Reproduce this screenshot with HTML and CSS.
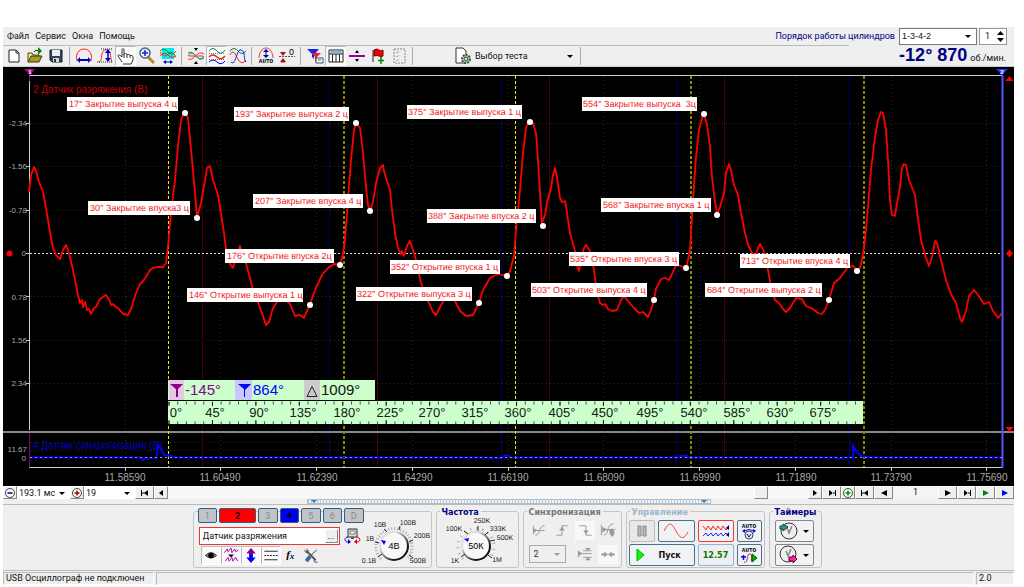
FILE: index.html
```html
<!DOCTYPE html>
<html lang="ru">
<head>
<meta charset="utf-8">
<title>USB Осциллограф</title>
<link rel="stylesheet" href="styles.css">
</head>
<body>
<div class="app">
<header class="head">
  <div class="menu-row">
    <nav class="menu">
      <button class="menu-item">Файл</button><button class="menu-item">Сервис</button><button class="menu-item">Окна</button><button class="menu-item">Помощь</button>
    </nav>
    <label class="order-label" for="order">Порядок работы цилиндров</label>
    <span class="pick order"><select id="order"><option>1-3-4-2</option></select></span>
    <span class="spin"><input id="cyl" aria-label="Номер цилиндра" value="1"><svg class="spin-arrows" viewBox="0 0 7 12" aria-hidden="true"><path d="M0 5 3.500 1 7 5zM0 8h7L3.500 12z"/></svg></span>
  </div>
  <div class="tool-row">
    <div class="tools">
      <button class="tool" aria-label="Новый"><svg viewBox="0 0 18 18"><path d="M4 3h7l3 3v9H4z" fill="#fff" stroke="#222"/><path d="M11 3v3h3" fill="none" stroke="#222"/></svg></button>
      <button class="tool" aria-label="Открыть"><svg viewBox="0 0 18 18"><path d="M2 15V6h4l1 2h6v2" fill="#f0e8a0" stroke="#554a00"/><path d="M2 15 5 9h11l-3 6z" fill="#a89830" stroke="#403800"/><path d="M8 5c1-2 3-2 4-1" fill="none" stroke="#222"/><path d="M12 0v8l4-4z" fill="#080"/></svg></button>
      <button class="tool" aria-label="Сохранить"><svg viewBox="0 0 18 18"><path d="M3 3h12v12H5l-2-2z" fill="#345" stroke="#123"/><path d="M5 3h8v6H5z" fill="#e8eef4"/><path d="M6 11h6v4H6z" fill="#cdd"/><path d="M7 12h2v3H7z" fill="#234"/></svg></button>
      <i class="sep"></i>
      <button class="tool" aria-label="Период"><svg viewBox="0 0 18 18"><path d="M2 14C0 7 4 2 9 2s9 5 7 12" fill="none" stroke="#f22"/><path d="M4 13h10" stroke="#00c" stroke-width="2"/><path d="M2 13l3-3v6zM16 13l-3-3v6z" fill="#00c"/></svg></button>
      <button class="tool" aria-label="Амплитуда"><svg viewBox="0 0 18 18"><path d="M1 15c5 0 4-3 5-8S11 2 13 4s1 7 3 11" fill="none" stroke="#f22"/><path d="M5 2h12M3 15h14" stroke="#222" stroke-dasharray="1 1"/><path d="M12 5v8" stroke="#00c" stroke-width="1.500"/><path d="M12 2l-3 4h6zM12 15l-3-4h6z" fill="#00c"/></svg></button>
      <button class="tool on" aria-label="Рука"><svg viewBox="0 0 18 18"><path d="M5 15 1 9c0-2 2-1 4 1V3c0-2 2-2 2 0v5c0-2 3-2 3 0 0-1 3-1 3 1 0-1 3-1 3 1v3l-2 4H6" fill="#fff" stroke="#333"/><path d="M7 8v3M10 8v3M13 9v2" stroke="#333"/></svg></button>
      <button class="tool" aria-label="Лупа"><svg viewBox="0 0 18 18"><path d="m10 10 6 6" stroke="#b98a30" stroke-width="3"/><circle cx="7" cy="6" r="5" fill="#e8f4ff" stroke="#468" stroke-width="1.500"/><path d="M4 6h6M7 3v6" stroke="#22b" stroke-width="1.500"/></svg></button>
      <button class="tool" aria-label="Область"><svg viewBox="0 0 18 18"><path d="M3 1h12v11H3z" fill="#0ee"/><path d="M1 4q4-4 8 1t8-1" fill="none" stroke="#084"/><path d="M1 9q4-5 8-1t8 1" fill="none" stroke="#e22"/><path d="M1 5q4 7 8 2t8 3" fill="none" stroke="#a52"/><path d="M5 15h8" stroke="#00c"/><path d="M4 15l3-2v4zM14 15l-3-2v4z" fill="#00c"/></svg></button>
      <i class="sep"></i>
      <button class="tool" aria-label="Совместить"><svg viewBox="0 0 18 18"><path d="M1 6c6-4 9 10 16 5" fill="none" stroke="#385"/><path d="M1 12c6 3 9-10 16-5M2 9h14" fill="none" stroke="#e33"/><path d="M1 9q4-6 8 0t8 0" fill="none" stroke="#385"/><path d="M9 4 7 1h4zM9 14l-2 3h4z"/></svg></button>
      <button class="tool on" aria-label="Разделить"><svg viewBox="0 0 18 18"><path d="M1 4q4-5 8 0t8-1" fill="none" stroke="#085"/><path d="M1 10q4-4 8 0t8-1" fill="none" stroke="#e22" stroke-width="1.500"/><path d="M1 15q4-4 8 0t8-1" fill="none" stroke="#00d"/><path d="M1 6.500h16M1 12.500h16" stroke="#777" stroke-dasharray="1 1"/></svg></button>
      <button class="tool" aria-label="Наложить"><svg viewBox="0 0 18 18"><path d="M1 4q4-5 8 0t8 0" fill="none" stroke="#084"/><path d="M1 8C7-4 8 24 17 13" fill="none" stroke="#e22"/><path d="M2 15C7 20 7 2 12 3s2 10 5 12" fill="none" stroke="#22d"/></svg></button>
      <i class="sep"></i>
      <button class="tool" aria-label="Авто"><svg viewBox="0 0 18 18"><path d="M2 11c0-5 3-10 7-10s7 5 7 10" fill="none" stroke="#e33"/><path d="M9 4v6" stroke="#00b"/><path d="M9 2 6 5h6zM9 11 6 8h6z" fill="#00b"/><text x="9" y="16" class="auto">AUTO</text></svg></button>
      <button class="tool" aria-label="Ноль"><svg viewBox="0 0 18 18"><path d="M1 9.500h16" stroke="#555" stroke-dasharray="2 1"/><path d="M5 9 2 5h6zM5 11l-3 4h6z" fill="#a11"/><path d="M3 15h4" stroke="#a11"/><text x="11" y="8" class="zero">0</text></svg></button>
      <i class="sep"></i>
      <button class="tool" aria-label="Фильтр"><svg viewBox="0 0 18 18"><path d="M1 2h12L8 8v4L6 10V7z" fill="#22e"/><path d="M6 6h9l-4 4v6l-2-2v-4z" fill="#e22"/><path d="M10 11h7v5h-7z" fill="#fff" stroke="#357"/><path d="M12 13h3" stroke="#357"/></svg></button>
      <button class="tool on" aria-label="Таблица"><svg viewBox="0 0 18 18"><path d="M2 3h14v12H2z" fill="#fff" stroke="#222"/><path d="M2 4h14v2H2z" fill="#7bd"/><path d="M2 7h14M5.500 7v8M9 7v8M12.500 7v8" stroke="#222"/></svg></button>
      <button class="tool" aria-label="Линия"><svg viewBox="0 0 18 18"><path d="M1 9h16" stroke="#90a" stroke-width="2"/><path d="M9 3 7 6h4zM9 15l-2-3h4z"/></svg></button>
      <button class="tool" aria-label="Метка"><svg viewBox="0 0 18 18"><path d="M4 3v12" stroke="#222"/><path d="M5 3q3-2 5 0t4 0v6q-2 1-4 0t-5 0z" fill="#e00" stroke="#700"/><path d="M12 10v7M9 13.500h6" stroke="#080" stroke-width="1.500"/></svg></button>
      <button class="tool" aria-label="Отчёт"><svg viewBox="0 0 18 18"><path d="M4 2h11v14H4z" fill="#eee" stroke="#888" stroke-dasharray="2 1"/><path d="m6 5 1 1 2-2M6 9l1 1 2-2M6 13l1 1 2-2" fill="none" stroke="#aaa"/></svg></button>
      <i class="sep"></i>
      <button class="test"><svg class="test-icon" viewBox="0 0 18 18"><path d="M2 1h7l3 3v12H2z" fill="#fff" stroke="#333"/><circle cx="12" cy="12" r="4" fill="#ccd8c4" stroke="#354" stroke-width="2" stroke-dasharray="2 1"/><circle cx="12" cy="12" r="2" fill="none" stroke="#354"/></svg><span>Выбор теста</span><i class="caret"></i></button>
      <i class="sep"></i>
    </div>
    <div class="readout"><b>-12° 870</b><span>об./мин.</span></div>
  </div>
</header>

<main>
<svg class="scope" viewBox="3 67 1011 419" role="img" aria-label="Осциллограмма">
  <rect x="3" y="67" width="1011" height="419"/>
  <g class="grid">
    <path d="M125.500 76v392M220.500 76v392M316.500 76v392M412.500 76v392M508.500 76v392M603.500 76v392M699.500 76v392M795.500 76v392M891.500 76v392M986.500 76v392"/>
    <path d="M30 123.500h972M30 166.500h972M30 210.500h972M30 296.500h972M30 340.500h972M30 383.500h972M30 442.500h972M30 450.500h972"/>
  </g>
  <path class="mark-red" d="M202.500 76v391M377.500 76v391M549.500 76v391M724.500 76v391"/>
  <path class="mark-blue" d="M329.500 76v391M501.500 76v391M676.500 76v391M849.500 76v391"/>
  <path class="frame" d="M29.500 430V75.500H1002M26 123.500h4M26 166.500h4M26 210.500h4M26 253.500h4M26 296.500h4M26 340.500h4M26 383.500h4M29.500 442v25.500H1002M125.500 467v4M220.500 467v4M316.500 467v4M412.500 467v4M508.500 467v4M603.500 467v4M699.500 467v4M795.500 467v4M891.500 467v4M986.500 467v4"/>
  <path d="M3 432h1011" stroke="#888" stroke-width="2"/>
  <path d="M30 253.500h972" stroke="#ddd" stroke-dasharray="2 2"/>
  <path d="M168.500 76v391M515.500 76v391" stroke="#ee0" stroke-dasharray="3 2"/>
  <path d="M344 76v391M691 76v391M864 76v391" stroke="#880" stroke-width="2" stroke-dasharray="3 2"/>
  <g class="channel-names"><text x="33" y="93" fill="#c00000">2 Датчик разряжения (В)</text><text x="33" y="449" fill="#0000c8">4 Датчик синхронизации (В)</text></g>
  <path class="wave" d="M29 192 31 175 34 167 36 171 39 182 43 192 46 208 50 232 53 248 56 255 60 259 63 250 66 245 69 253 73 270 78 295 80 303 82 300 83 307 85 302 87 310 89 309 91 314 94 308 96 307 100 299 103 297 106 295 109 299 111 305 113 304 116 307 118 308 123 314 128 315 131 309 136 293 140 284 144 280 150 270 153 268 157 267 163 267 166 263 168 246 171 213 175 180 178 146 181 120 184 112 188 118 192 160 195 193 197 217 201 203 205 180 207 168 210 166 213 180 218 195 220 207 224 233 227 257 230 264 233 268 236 256 240 246 246 263 253 290 259 305 263 316 266 325 269 322 273 308 279 299 285 299 290 304 295 316 300 315 304 318 307 311 310 304 315 290 322 275 328 268 334 264 339 265 342 259 345 240 348 200 351 160 354 130 356 123 360 128 363 153 366 187 368 205 370 211 373 202 376 183 380 168 381 167 383 165 384 171 386 178 388 184 390 190 392 210 395 233 398 248 401 254 402 251 404 256 407 246 410 241 413 250 416 260 421 283 428 301 433 312 436 315 441 305 446 297 451 296 455 301 460 311 466 316 473 315 476 309 479 302 483 290 490 278 498 274 502 275 507 276 510 271 514 256 516 230 520 190 523 153 526 128 529 121 533 123 536 133 538 160 540 193 542 223 545 215 547 203 551 188 553 175 555 168 557 177 560 198 562 202 565 201 567 213 570 233 575 251 577 266 579 271 581 260 584 248 586 245 590 251 594 270 597 293 600 303 603 305 605 304 608 309 612 311 617 310 621 300 624 296 628 301 634 308 639 313 643 312 648 317 651 310 654 300 656 289 661 279 665 278 669 280 672 274 676 265 681 266 686 268 688 260 690 250 693 200 696 157 699 130 702 118 704 114 707 125 710 147 712 177 715 202 717 214 720 207 724 193 726 173 729 164 731 170 734 185 738 195 741 213 745 233 748 245 752 253 756 255 758 248 760 244 764 251 768 270 771 287 775 300 779 303 783 309 786 312 790 308 796 298 802 299 806 306 813 309 818 313 822 314 825 310 829 300 834 283 840 278 848 267 853 266 857 270 860 268 862 260 865 240 868 207 871 170 875 137 878 120 881 112 883 113 886 130 888 160 890 200 892 215 895 216 897 203 900 187 902 168 904 164 906 165 909 180 915 195 917 212 921 240 926 258 929 266 932 257 935 241 937 243 941 260 946 280 951 294 956 303 960 318 962 322 966 311 969 296 974 290 978 295 984 304 989 302 993 311 998 318 1002 313"/>
  <path class="sync" d="M30 457.500H141L143 460 145 458H156.500L158 445 161 449 164 455 170 456 176 457.500H488L490 459 494 458 502 458 506 455 511 457.500H680V456H687V457.500H836L839 459 843 457.500H853V446L857 452 861 456 870 457.500H1002"/>
  <path d="M30 457.500h972" stroke="#99b" stroke-dasharray="2 3"/>
  <g class="callouts">
    <rect x="67" y="97" width="111" height="14"/><rect x="234" y="107" width="115" height="14"/><rect x="407" y="105" width="115" height="14"/><rect x="582" y="97" width="115" height="14"/>
    <rect x="88" y="201" width="102" height="14"/><rect x="253" y="194" width="110" height="14"/><rect x="427" y="209" width="109" height="14"/><rect x="601" y="198" width="110" height="14"/>
    <rect x="225" y="249" width="109" height="14"/><rect x="390" y="260" width="110" height="14"/><rect x="569" y="252" width="110" height="14"/><rect x="740" y="254" width="110" height="14"/>
    <rect x="187" y="288" width="116" height="14"/><rect x="356" y="287" width="116" height="14"/><rect x="531" y="283" width="116" height="14"/><rect x="705" y="283" width="117" height="14"/>
    <text x="69" y="107">17° Закрытие выпуска 4 ц</text><text x="235" y="117">193° Закрытие выпуска 2 ц</text><text x="408" y="115">375° Закрытие выпуска 1 ц</text><text x="583" y="107" xml:space="preserve">554° Закрытие выпуска  3ц</text>
    <text x="90" y="211">30° Закрытие впуска3 ц</text><text x="255" y="204">207° Закрытие впуска 4 ц</text><text x="428" y="219">388° Закрытие впуска 2 ц</text><text x="603" y="208">568° Закрытие впуска 1 ц</text>
    <text x="227" y="259">176° Открытие впуска 2ц</text><text x="391" y="270">352° Открытие впуска 1 ц</text><text x="570" y="262">535° Открытие впуска 3 ц</text><text x="741" y="264">713° Открытие впуска 4 ц</text>
    <text x="189" y="298">146° Открытие выпуска 1 ц</text><text x="357" y="297">322° Открытие выпуска 3 ц</text><text x="532" y="293">503° Открытие выпуска 4 ц</text><text x="707" y="293">684° Открытие выпуска 2 ц</text>
  </g>
  <g fill="#fff"><circle cx="185" cy="113" r="3"/><circle cx="356" cy="123" r="3"/><circle cx="530" cy="122" r="3"/><circle cx="704" cy="114" r="3"/><circle cx="197" cy="218" r="3"/><circle cx="370" cy="211" r="3"/><circle cx="543" cy="226" r="3"/><circle cx="717" cy="215" r="3"/><circle cx="340" cy="265" r="3"/><circle cx="507" cy="276" r="3"/><circle cx="686" cy="268" r="3"/><circle cx="857" cy="271" r="3"/><circle cx="310" cy="305" r="3"/><circle cx="479" cy="303" r="3"/><circle cx="654" cy="300" r="3"/><circle cx="829" cy="300" r="3"/></g>
  <g class="y-axis"><text x="27" y="126">-2.34</text><text x="27" y="169">-1.56</text><text x="27" y="213">-0.78</text><text x="26" y="256">0</text><text x="27" y="300">0.78</text><text x="27" y="343">1.56</text><text x="27" y="386">2.34</text><text x="27" y="452">11.67</text><text x="26" y="461">0</text></g>
  <g class="x-axis"><text x="125" y="481">11.58590</text><text x="220" y="481">11.60490</text><text x="317" y="481">11.62390</text><text x="412" y="481">11.64290</text><text x="508" y="481">11.66190</text><text x="604" y="481">11.68090</text><text x="700" y="481">11.69990</text><text x="796" y="481">11.71890</text><text x="891" y="481">11.73790</text><text x="987" y="481">11.75690</text></g>
  <g class="ruler">
    <rect x="168" y="380" width="207" height="20" fill="#cfc"/><rect x="169" y="380" width="15" height="20" fill="#e6c8e6"/><rect x="235" y="380" width="17" height="20" fill="#c8c8ff"/><rect x="304" y="380" width="16" height="20" fill="#ccc"/>
    <path d="M170 384h13l-6 6zM176 386h2v11h-2z" fill="#808"/><path d="M238 384h13l-6 6zM244 386h1v11h-1z" fill="#00f"/><path d="M307 396.500h10l-5-10z" fill="none" stroke="#222"/>
    <g class="deltas"><text x="185" y="395" fill="#808">-145°</text><text x="253" y="395" fill="#00f">864°</text><text x="321" y="395" fill="#111">1009°</text></g>
    <rect x="168" y="401" width="695" height="23" fill="#cfc"/>
    <path d="M168.500 403h695M168.500 423h695" stroke="#354" stroke-width="3" stroke-dasharray="1 7.690"/><path d="M168.500 404h695M168.500 422h695" stroke="#121" stroke-width="4" stroke-dasharray="1 42.440"/>
    <g class="degrees"><text x="176" y="417">0°</text><text x="215" y="417">45°</text><text x="259" y="417">90°</text><text x="303" y="417">135°</text><text x="347" y="417">180°</text><text x="390" y="417">225°</text><text x="432" y="417">270°</text><text x="475" y="417">315°</text><text x="518" y="417">360°</text><text x="562" y="417">405°</text><text x="605" y="417">450°</text><text x="650" y="417">495°</text><text x="694" y="417">540°</text><text x="737" y="417">585°</text><text x="780" y="417">630°</text><text x="823" y="417">675°</text></g>
  </g>
  <path d="M29.500 76v5M29.500 433v34" stroke="#808"/><path d="M24 69h11l-5 6z" fill="#a0a"/><text x="30" y="74" class="flag">1</text>
  <path d="M1002.500 75v393" stroke="#55f" stroke-width="2"/><path d="M996 69h12l-6 6z" fill="#33f"/><text x="1002" y="74" class="flag">2</text>
  <path d="M1009.500 76l4 5h-8zM1009.500 432l4-5h-8zM1009.500 249.500l3.500 4-3.500 4-3.500-4z" fill="#f00"/><circle cx="9.500" cy="253.500" r="3" fill="#f00"/>
</svg>
</main>

<div class="nav-row">
  <button class="nav round" aria-label="Сжать"><svg viewBox="0 0 12 12"><circle cx="6" cy="6" r="4.500" fill="#fff" stroke="#444"/><path d="M3.500 6h5" stroke="#008" stroke-width="1.500"/></svg></button>
  <span class="pick time"><select aria-label="Развёртка"><option>193.1 мс</option></select></span>
  <button class="nav round" aria-label="Растянуть"><svg viewBox="0 0 12 12"><circle cx="6" cy="6" r="4.500" fill="#fff" stroke="#444"/><path d="M3.500 6h5M6 3.500v5" stroke="#a00" stroke-width="1.500"/></svg></button>
  <span class="pick count"><select aria-label="Кадр"><option>19</option></select></span>
  <button class="nav" aria-label="В начало"><svg viewBox="0 0 12 12"><path d="M2 3h1v6H2zM9 3v6L5 6zM3 5.500h3v1H3z"/></svg></button>
  <button class="nav small" aria-label="Назад"><svg viewBox="0 0 12 12"><path d="M8 3v6L4 6z"/></svg></button>
  <div class="track"><span class="thumb"></span></div>
  <button class="nav small" aria-label="Вперёд"><svg viewBox="0 0 12 12"><path d="M4 3v6l4-3z"/></svg></button>
  <button class="nav" aria-label="В конец"><svg viewBox="0 0 12 12"><path d="M9 3h1v6H9zM3 3v6l4-3zM6 5.500h3v1H6z"/></svg></button>
  <button class="nav round" aria-label="Добавить"><svg viewBox="0 0 12 12"><circle cx="6" cy="6" r="4.500" fill="#fff" stroke="#444"/><path d="M3.500 6h5M6 3.500v5" stroke="#080" stroke-width="1.500"/></svg></button>
  <button class="nav" aria-label="Первый"><svg viewBox="0 0 12 12"><path d="M2 3h1v6H2zM9 3v6L5 6zM3 5.500h3v1H3z"/></svg></button>
  <button class="nav" aria-label="Предыдущий"><svg viewBox="0 0 12 12"><path d="M9 3v6L3 6z"/></svg></button>
  <span class="page">1</span>
  <button class="nav" aria-label="Следующий"><svg viewBox="0 0 12 12"><path d="M3 3v6l6-3z"/></svg></button>
  <button class="nav" aria-label="Последний"><svg viewBox="0 0 12 12"><path d="M9 3h1v6H9zM3 3v6l4-3zM6 5.500h3v1H6z"/></svg></button>
  <button class="nav" aria-label="Воспроизвести"><svg viewBox="0 0 12 12"><path d="M3 3v6l6-3z" fill="#080"/></svg></button>
  <button class="nav" aria-label="Далее"><svg viewBox="0 0 12 12"><path d="M3 3v6l6-3z" fill="#00f"/></svg></button>
</div>
<div class="splitter"><span class="grip"></span></div>

<section class="panel">
  <div class="group channels">
    <div class="channel-left">
      <div class="tabs"><button class="tab">1</button><button class="tab red">2</button><button class="tab">3</button><button class="tab blue">4</button><button class="tab">5</button><button class="tab">6</button><button class="tab">D</button></div>
      <div class="sensor-row"><span class="sensor"><input aria-label="Датчик" value="Датчик разряжения"><button class="more" aria-label="Выбрать датчик">...</button></span>
        <button class="tool" aria-label="Подключение"><svg viewBox="0 0 18 18"><path d="M5 2h9v8H5z" fill="#ddd" stroke="#333"/><path d="M7 4h5v3H7z" fill="#fff" stroke="#777"/><path d="M8 10h3v2H8z" fill="#555"/><path d="M5 10c-4 0-4 5 0 5" fill="none" stroke="#00c"/><path d="m5 12 3 3-3 2z" fill="#00c"/><path d="M13 10c5 0 5 5 1 5" fill="none" stroke="#e00"/><path d="m14 12-3 3 3 2z" fill="#e00"/></svg></button></div>
      <div class="view-row">
        <button class="view on" aria-label="Показать"><svg viewBox="0 0 18 18"><path d="M3 9q6-6 12 0-6 5-12 0" fill="#999" stroke="#222"/><circle cx="9" cy="9" r="3"/></svg></button>
        <button class="view on" aria-label="Форма"><svg viewBox="0 0 18 18"><path d="m2 6 3-4 1 3 3-4 1 5 3-4 1 3 3-2" fill="none" stroke="#a0a"/><path d="m3 15 3-4 1 4 3-4 1 4 3-4 2 4" fill="none" stroke="#a0a"/><path d="M6 8h6l-3 3z"/></svg></button>
        <button class="view on" aria-label="Инверсия"><svg viewBox="0 0 18 18"><path d="m9 1 5 6h-3v2H7V7H4z" fill="#808"/><path d="m9 17 5-6h-3V8H7v3H4z" fill="#00f"/></svg></button>
        <button class="view on" aria-label="Уровни"><svg viewBox="0 0 18 18"><path d="M2 4.500h14M2 13.500h14" stroke="#222"/><path d="M2 9h14" stroke="#222" stroke-dasharray="2 1"/></svg></button>
        <button class="view" aria-label="Функция"><svg viewBox="0 0 18 18"><text x="4" y="12" class="fx">f</text><text x="8" y="13" class="fx-sub">x</text></svg></button>
        <button class="view" aria-label="Настройка"><svg viewBox="0 0 18 18"><path d="m4 4 10 10" stroke="#555" stroke-width="2"/><path d="M15 3 8 10" stroke="#333"/><path d="m8 10-4 5" stroke="#36a" stroke-width="4"/><path d="M2 3q1 4 4 3 1-3-2-4M12 14q0 3 4 2" fill="none" stroke="#555"/></svg></button>
      </div>
    </div>
    <svg class="knob volts" viewBox="360 516 72 51" role="img" aria-label="Чувствительность 4В">
      <defs><linearGradient id="rim" x1="0" y1="0" x2="1" y2="1"><stop offset=".3" stop-color="#ddd"/><stop offset=".75" stop-color="#111"/></linearGradient></defs>
      <path class="knob-ticks" d="M381 560A18 18 0 1 1 407 560"/><circle cx="394" cy="547" r="14" fill="#f8f8f8" stroke="url(#rim)" stroke-width="2"/>
      <path d="m381 541 5 1-2 4z" fill="#00f"/><path class="marks" d="m378 558 4-3M375 543l4 1M384 530l3 3M400 527l-1 4M413 541l-4 2M409 556l4 3"/>
      <text x="394" y="550" class="knob-value">4В</text>
      <g class="knob-labels"><text x="369" y="564">0.1В</text><text x="370" y="542">1В</text><text x="380" y="528">10В</text><text x="408" y="526">100В</text><text x="422" y="539">200В</text><text x="418" y="564">500В</text></g>
    </svg>
  </div>
  <fieldset class="group freq"><legend>Частота</legend>
    <svg class="knob hertz" viewBox="440 516 76 51" role="img" aria-label="Частота 50K">
      <path class="knob-ticks wide-ticks" d="M463 560A18 18 0 1 1 489 560"/><circle cx="476" cy="547" r="14" fill="#f8f8f8" stroke="url(#rim)" stroke-width="2"/>
      <path d="m464 540 5-1-1 4z" fill="#00f"/><path class="marks" d="m461 558 4-3M464 532l4 3M478 527v5M488 533l-3 3M495 541l-5 1M488 556l4 3"/>
      <text x="476" y="550" class="knob-value">50К</text>
      <g class="knob-labels"><text x="455" y="564">1K</text><text x="454" y="532">100K</text><text x="482" y="524">250K</text><text x="498" y="532">333K</text><text x="505" y="541">500K</text><text x="497" y="563">1M</text></g>
    </svg>
  </fieldset>
  <fieldset class="group sync-group"><legend>Синхронизация</legend>
    <div class="sync-grid">
      <button class="view" aria-label="По спаду"><svg viewBox="0 0 18 18"><path class="dim" d="M3 4v9M3 9h12M5 14c6 0 3-10 10-10"/><path d="m3 6 4 3-4 3z" fill="#999"/></svg></button>
      <button class="view" aria-label="Фронт"><svg viewBox="0 0 18 18"><path class="dim" d="M3 14h6V4h6"/><path d="M9 5 6 9h6z" fill="#999"/></svg></button>
      <button class="view lit" aria-label="Спад"><svg viewBox="0 0 18 18"><path class="dim" d="M3 4h7v10h6"/><path d="m10 13-3-4h6z" fill="#999"/></svg></button>
      <button class="view" aria-label="Ручная"><svg viewBox="0 0 18 18"><path class="dim" d="M2 3v11M2 8h15M5 14C11 12 6 3 15 2"/><path d="m3 5 5 3-5 3zM10 8l4-1 2 4-2 5-3-3z" fill="#999"/></svg></button>
      <span class="pick source"><select aria-label="Источник" disabled><option>2</option></select></span>
      <button class="view" aria-label="Уровень"><svg viewBox="0 0 18 18"><path class="dim" d="M2 5v7M7 5h9M7 12h9M2 8h14"/><path d="m2 5 4 3-4 3zM12 5l3-3H9zM12 12l3 3H9z" fill="#999"/></svg></button>
      <button class="view lit" aria-label="Свести"><svg viewBox="0 0 18 18"><path d="M2 8h3V6l4 3-4 3v-2H2zM16 8h-3V6L9 9l4 3v-2h3z" fill="#999"/></svg></button>
    </div>
  </fieldset>
  <fieldset class="group control"><legend>Управление</legend>
    <div class="control-grid">
      <button class="push flat" aria-label="Пауза"><svg viewBox="0 0 18 18"><path d="M5 4h3v10H5zM10 4h3v10h-3z" fill="#bbb" stroke="#888"/></svg></button>
      <button class="push" aria-label="Синус"><svg class="wide" viewBox="0 0 30 18"><path d="M3 9C8-1 11 1 15 9s8 9 12 1" fill="none" stroke="#f33"/></svg></button>
      <button class="push red-edge" aria-label="Запись"><svg class="wide" viewBox="0 0 30 18"><path d="m2 4 3 4 2-4 3 4 2-4 3 4 2-4 3 4 2-4 3 4 2-3" fill="none" stroke="#f22"/><path d="m2 14 3-3 2 3 3-3 2 3 3-3 2 3 3-3 2 3 3-3 2 2" fill="none" stroke="#22f"/><path d="M25 6l3 2V3zM25 13l3 2v-5z" fill="#008"/></svg></button>
      <button class="push" aria-label="Авто ручки"><svg viewBox="0 0 18 18"><text x="9" y="6" class="auto">AUTO</text><path d="M4 9q5-3 10 0" fill="none" stroke="#00f"/><path d="m2 9 3-2v4zM16 9l-3-2v4z" fill="#00f"/><circle cx="9" cy="13" r="4" fill="#eee" stroke="#444"/><path d="m7 12 2 3 2-3" fill="none" stroke="#00a"/></svg></button>
      <button class="push start"><svg viewBox="0 0 12 18"><path d="M2 3v12l7-6z" fill="#0f0" stroke="#0a0"/></svg><b>Пуск</b></button>
      <output class="timer">12.57</output>
      <button class="push" aria-label="Автозапуск"><svg viewBox="0 0 18 18"><text x="9" y="6" class="auto">AUTO</text><path d="M1 11h5M3.500 9v5" stroke="#00f" stroke-width="1.500"/><path d="M4 16c5 2 2-9 6-8s-1 9 3 7" fill="none" stroke="#b33"/><path d="m12 8 5 4-5 4z" fill="#0a0" stroke="#050"/></svg></button>
    </div>
  </fieldset>
  <fieldset class="group timers"><legend>Таймеры</legend>
    <div class="timer-list">
      <button class="push clock" aria-label="Таймер запуска"><svg viewBox="0 0 22 20"><circle cx="13" cy="10" r="8" fill="#eee" stroke="#333"/><path d="m11 7 2 5 3-7" fill="none" stroke="#888" stroke-width="1.500"/><path d="M4 5h3V3l5 3-5 4V8H4z" fill="#3a9a90" stroke="#044"/></svg><i class="caret"></i></button>
      <button class="push clock" aria-label="Таймер остановки"><svg viewBox="0 0 22 20"><circle cx="12" cy="9" r="8" fill="#eee" stroke="#333"/><path d="m10 6 2 5 3-7" fill="none" stroke="#888" stroke-width="1.500"/><path d="M13 12h4v-2l4 4-4 4v-2h-4z" fill="#f2a" stroke="#603"/></svg><i class="caret"></i></button>
    </div>
  </fieldset>
</section>
<footer class="status"><span class="state">USB Осциллограф не подключен</span><span class="blank"></span><span class="ver">2.0</span></footer>
</div>
</body>
</html>
```
FILE: styles.css
```css
* { box-sizing: border-box; }
body { margin: 0; padding: 27px 10px 4px 3px; background: #fff; font-family: Roboto, "Liberation Sans", sans-serif; font-size: 9px; line-height: 12px; color: #111; }
button, input, select { font: inherit; color: inherit; margin: 0; padding: 0; border: 0; background: none; border-radius: 0; }
svg { display: block; }
b, legend { font-family: "DejaVu Sans Condensed", "DejaVu Sans", sans-serif; }
.app { background: #efefef; }

.menu-row { display: flex; align-items: center; height: 19px; border-bottom: 1px solid #bbb; }
.menu { display: flex; gap: 6px; padding-left: 4px; margin-right: auto; }
.order-label { color: #000080; margin-right: 4px; }
.pick { position: relative; display: block; background: #fff; }
.pick::after { content: ""; position: absolute; right: 5px; top: 50%; margin-top: -1px; border: 3px solid transparent; border-top-color: #000; border-bottom: 0; pointer-events: none; }
.pick select { display: block; width: 100%; height: 100%; padding-left: 2px; appearance: none; }
.order { width: 78px; height: 17px; border: 1px solid #777; font-family: "Liberation Sans", sans-serif; }
.spin { display: flex; align-items: center; width: 28px; height: 17px; margin: 0 7px 0 2px; background: #fff; border: 1px solid #999; }
.spin input { width: 17px; padding-left: 5px; }
.spin-arrows { width: 7px; height: 12px; }

.tool-row { display: flex; height: 21px; border-bottom: 1px solid #ccc; }
.tools { display: flex; flex: 1; }
.tool { display: grid; place-items: center; width: 21px; height: 20px; }
.tool svg { width: 18px; height: 18px; }
.on { background: #fafafa; border: 1px solid #bbb; border-right-color: #fff; border-bottom-color: #fff; }
.sep { width: 1px; margin: 1px 3px; background: #aaa; }
.test { display: flex; align-items: center; width: 123px; margin-left: 38px; }
.test-icon { width: 18px; height: 18px; margin-right: 3px; }
.caret { width: 0; height: 0; margin-left: auto; border: 3px solid transparent; border-top-color: #000; border-bottom: 0; }
.test .caret { margin-right: 4px; }
.readout { display: flex; align-items: baseline; gap: 3px; padding: 0 8px 0 50px; margin-top: -1px; background: #efefef; }
.readout b { color: #000080; font: bold 18px/21px "Liberation Sans", sans-serif; }
.auto { font: bold 6px "Liberation Mono", monospace; text-anchor: middle; }
.zero { font: 9px "Liberation Sans", sans-serif; }
.fx { font: italic bold 12px "Liberation Serif", serif; }
.fx-sub { font: italic bold 9px "Liberation Serif", serif; }

.scope { width: 100%; height: auto; font-family: "Liberation Sans", sans-serif; }
.grid { stroke: #2c2c14; stroke-dasharray: 1 3; }
.mark-red { stroke: #4a0000; }
.mark-blue { stroke: #00006a; }
.frame { fill: none; stroke: #ccc; }
.channel-names { font-size: 10px; }
.wave { fill: none; stroke: #f00; stroke-width: 1.8; stroke-linejoin: round; }
.sync { fill: none; stroke: #00f; stroke-width: 2; }
.callouts { font-size: 9px; text-rendering: geometricPrecision; }
.callouts rect { fill: #fff; }
.callouts text { fill: #f02020; }
.y-axis { font-size: 8px; fill: #aaa; text-anchor: end; }
.x-axis { font-size: 10px; fill: #aaa; text-anchor: middle; }
.deltas { font-size: 15px; }
.degrees { font-size: 13px; fill: #121; text-anchor: middle; text-rendering: geometricPrecision; }
.flag { font-size: 6px; font-weight: bold; fill: #fff; text-anchor: middle; }

.nav-row { display: flex; align-items: stretch; height: 13px; background: #f4f4f4; }
.nav { display: grid; place-items: center; width: 19px; border: 1px solid #fff; border-right-color: #888; border-bottom-color: #888; background: #efefef; }
.nav svg { width: 12px; height: 12px; }
.nav.round, .nav.small { width: 14px; }
.time { width: 53px; }
.count { width: 51px; }
.track { display: flex; flex: 1; justify-content: flex-end; padding-right: 40px; background: #f8f8f8; }
.thumb { width: 14px; background: #efefef; border: 1px solid #fff; border-right-color: #888; border-bottom-color: #888; }
.page { width: 45px; text-align: center; }

.splitter { display: flex; justify-content: center; height: 6px; border-bottom: 1px solid #bbb; }
.grip { display: flex; align-items: center; justify-content: space-between; width: 404px; padding: 0 3px; border: 1px solid #bbb; background: repeating-linear-gradient(90deg, #a8cbe8 0 1px, #eef4fa 1px 3px); }
.grip::before, .grip::after { content: ""; border: 3px solid transparent; border-top-color: #28c; border-bottom: 0; }

.panel { display: flex; justify-content: center; gap: 4px; padding: 6px 3px 2px 0; border-bottom: 1px solid #bbb; }
.group { margin: 0; padding: 0; min-width: 0; height: 57px; border: 1px solid #c4c4c4; border-radius: 3px; }
fieldset.group { position: relative; }
legend { position: absolute; left: 3px; top: -6px; padding: 0 2px; background: #efefef; font-weight: bold; line-height: 12px; color: #000080; }
.channels { display: flex; width: 239px; padding-left: 4px; }
.tabs { display: flex; gap: 2px; margin-top: -4px; }
.tab { width: 20px; height: 15px; background: #c0c4c8; border: 1px solid #346080; border-radius: 2px; color: #888; }
.tab.red { width: 38px; background: #f00; color: #200; font-weight: bold; }
.tab.blue { background: #00e; color: #002; font-weight: bold; }
.channel-left { width: 166px; }
.sensor-row { display: flex; gap: 2px; align-items: center; margin-top: 3px; }
.sensor { display: flex; width: 141px; height: 18px; margin-left: 1px; background: #fff; border: 1px solid #e33; }
.sensor input { flex: 1; min-width: 0; padding-left: 3px; }
.more { width: 13px; height: 14px; margin: 1px; background: #eee; border: 1px solid #fff; border-right-color: #888; border-bottom-color: #888; line-height: 8px; }
.view-row { display: flex; padding-left: 3px; }
.view { display: grid; place-items: center; width: 20px; height: 19px; }
.view-row .view { flex: 0 0 20px; }
.view svg { width: 18px; height: 17px; }
.knob { height: 51px; font-family: "Liberation Sans", sans-serif; overflow: visible; }
.volts { width: 72px; margin: 3px 0 0 -4px; }
.hertz { width: 76px; margin: 3px 0 0 3px; }
.knob-ticks { fill: none; stroke: #aaa; stroke-width: 3; stroke-dasharray: 1 2; }
.wide-ticks { stroke-dasharray: 1 5; }
.marks { stroke: #222; fill: none; }
.knob-value { font-size: 9px; text-anchor: middle; }
.knob-labels { font-size: 7px; text-anchor: middle; fill: #222; text-rendering: geometricPrecision; }
.freq { width: 83px; }
.sync-group { width: 99px; }
.sync-group legend { color: #777; }
.sync-grid { display: grid; grid-template-columns: repeat(4, 20px); gap: 5px 3px; padding: 9px 0 0 5px; }
.lit { background: #f8f8f8; }
.dim { fill: none; stroke: #999; }
.source { grid-column: span 2; width: 37px; height: 18px; border: 1px solid #aaa; background: #efefef; color: #444; }
.source::after { border-top-color: #999; }
.source select { padding-left: 4px; opacity: 1; color: #333; }
.control { width: 139px; }
.control legend { color: #9ab4d0; }
.control-grid { display: grid; grid-template-columns: 26px 37px 36px 25px; grid-auto-rows: 22px; gap: 2px 3px; padding: 8px 0 0 2px; }
.push { display: flex; align-items: center; justify-content: center; border: 1px solid #4a7290; border-radius: 2px; background: #f0f2f4; }
.push svg { width: 18px; height: 18px; }
.push svg.wide { width: 30px; }
.push.flat { border-color: #bbb; background: #e8e8e8; }
.push.red-edge { border-color: #f33; }
.push.start { grid-column: span 2; justify-content: flex-start; gap: 9px; padding-left: 2px; }
.push.start b { font-size: 9px; }
.timer { display: grid; place-items: center; border: 1px solid #8ab4d8; border-radius: 2px; color: #087808; font: bold 9px "DejaVu Sans Condensed", "DejaVu Sans", sans-serif; }
.timers { width: 53px; }
.timer-list { display: grid; gap: 2px; grid-auto-rows: 22px; padding: 8px 7px 0 5px; }
.clock { border-color: #888; }
.push.clock svg { width: 22px; height: 20px; }
.clock .caret { margin: 0 4px 0 auto; }

.status { display: flex; height: 13px; margin-top: 1px; }
.status span { border: 1px solid #bbb; border-right-color: #fff; border-bottom-color: #fff; line-height: 11px; }
.state { width: 151px; padding-left: 2px; }
.blank { flex: 1; margin: 0 2px; }
.ver { width: 38px; padding-left: 2px; }
```
